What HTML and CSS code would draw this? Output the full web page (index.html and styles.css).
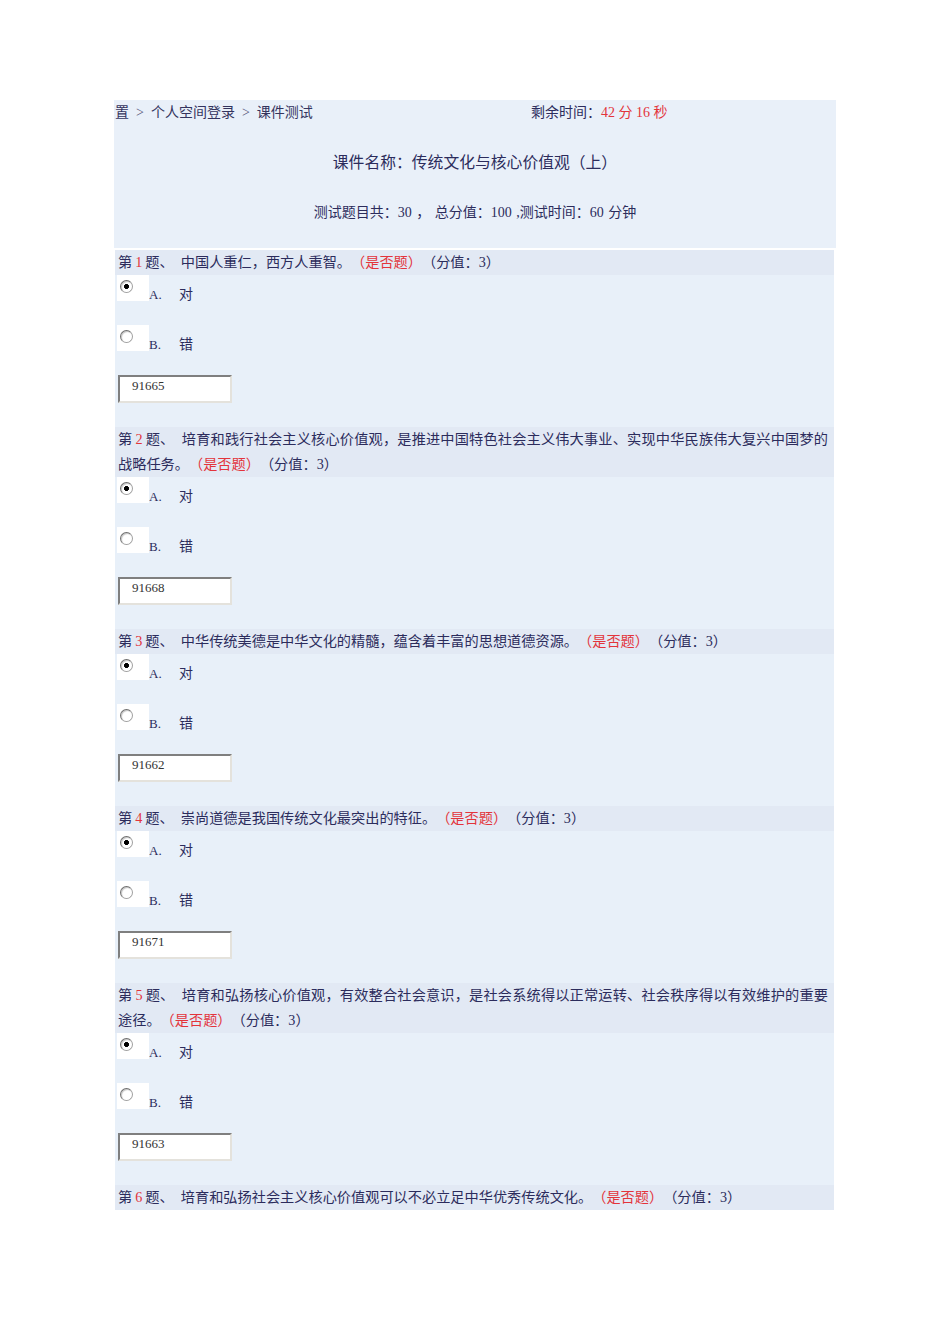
FILE: index.html
```html
<!DOCTYPE html>
<html lang="zh-CN">
<head>
<meta charset="utf-8">
<title>课件测试</title>
<link rel="stylesheet" href="styles.css">
</head>
<body>
<div class="page">
  <div class="top">
    <div class="bar">
      <div class="crumbs">置<span class="sep">&gt;</span>个人空间登录<span class="sep">&gt;</span>课件测试</div>
      <div class="timer">剩余时间：<span class="red">42 分 16 秒</span></div>
    </div>
    <div class="title">课件名称：传统文化与核心价值观（上）</div>
    <div class="info">测试题目共：30 ， 总分值：100 ,测试时间：60 分钟</div>
  </div>

  <div class="qs">
    <div class="q">
      <div class="q-head">第<span class="num">1</span>题、&nbsp;&nbsp;中国人重仁，西方人重智。<span class="red">（是否题）</span>（分值：3）</div>
      <label class="opt"><span class="rbox"><input type="radio" name="q1" checked></span><span class="letter">A.</span><span class="txt">对</span></label>
      <label class="opt"><span class="rbox"><input type="radio" name="q1"></span><span class="letter">B.</span><span class="txt">错</span></label>
      <input class="code" type="text" value="91665" readonly>
    </div>

    <div class="q">
      <div class="q-head">第<span class="num">2</span>题、&nbsp;&nbsp;培育和践行社会主义核心价值观，是推进中国特色社会主义伟大事业、实现中华民族伟大复兴中国梦的战略任务。<span class="red">（是否题）</span>（分值：3）</div>
      <label class="opt"><span class="rbox"><input type="radio" name="q2" checked></span><span class="letter">A.</span><span class="txt">对</span></label>
      <label class="opt"><span class="rbox"><input type="radio" name="q2"></span><span class="letter">B.</span><span class="txt">错</span></label>
      <input class="code" type="text" value="91668" readonly>
    </div>

    <div class="q">
      <div class="q-head">第<span class="num">3</span>题、&nbsp;&nbsp;中华传统美德是中华文化的精髓，蕴含着丰富的思想道德资源。<span class="red">（是否题）</span>（分值：3）</div>
      <label class="opt"><span class="rbox"><input type="radio" name="q3" checked></span><span class="letter">A.</span><span class="txt">对</span></label>
      <label class="opt"><span class="rbox"><input type="radio" name="q3"></span><span class="letter">B.</span><span class="txt">错</span></label>
      <input class="code" type="text" value="91662" readonly>
    </div>

    <div class="q">
      <div class="q-head">第<span class="num">4</span>题、&nbsp;&nbsp;崇尚道德是我国传统文化最突出的特征。<span class="red">（是否题）</span>（分值：3）</div>
      <label class="opt"><span class="rbox"><input type="radio" name="q4" checked></span><span class="letter">A.</span><span class="txt">对</span></label>
      <label class="opt"><span class="rbox"><input type="radio" name="q4"></span><span class="letter">B.</span><span class="txt">错</span></label>
      <input class="code" type="text" value="91671" readonly>
    </div>

    <div class="q">
      <div class="q-head">第<span class="num">5</span>题、&nbsp;&nbsp;培育和弘扬核心价值观，有效整合社会意识，是社会系统得以正常运转、社会秩序得以有效维护的重要途径。<span class="red">（是否题）</span>（分值：3）</div>
      <label class="opt"><span class="rbox"><input type="radio" name="q5" checked></span><span class="letter">A.</span><span class="txt">对</span></label>
      <label class="opt"><span class="rbox"><input type="radio" name="q5"></span><span class="letter">B.</span><span class="txt">错</span></label>
      <input class="code" type="text" value="91663" readonly>
    </div>

    <div class="q last">
      <div class="q-head">第<span class="num">6</span>题、&nbsp;&nbsp;培育和弘扬社会主义核心价值观可以不必立足中华优秀传统文化。<span class="red">（是否题）</span>（分值：3）</div>
    </div>
  </div>
</div>
</body>
</html>
```

FILE: styles.css
```css
html, body {
  margin: 0;
  padding: 0;
  background: #ffffff;
}

body {
  font-family: "Liberation Serif", "Noto Sans CJK SC", serif;
  font-size: 14px;
  color: #2c2c5c;
  text-spacing-trim: space-all;
}

.page {
  margin: 100px 0 0 114px;
  width: 722px;
}

.red {
  color: #e3343b;
}

.top {
  background: #e9f0f9;
  height: 148px;
}

.bar {
  display: grid;
  grid-template-columns: 417px 1fr;
  line-height: 25px;
  height: 25px;
}

.crumbs {
  padding-left: 1px;
  white-space: nowrap;
  color: #34345e;
}

.sep {
  margin: 0 7px;
  color: #55557a;
}

.timer {
  white-space: nowrap;
}

.title {
  margin-top: 25px;
  line-height: 25px;
  font-size: 15.8px;
  text-align: center;
}

.info {
  margin-top: 25px;
  line-height: 25px;
  font-size: 14px;
  word-spacing: 1px;
  text-align: center;
}

.qs {
  margin-top: 2px;
  width: 719px;
  margin-left: 1px;
}

.q {
  background: #e8f0f9;
  padding-bottom: 24px;
}

.q.last {
  padding-bottom: 0;
}

.q-head {
  background: #e2e9f4;
  line-height: 25px;
  font-size: 14.2px;
  text-align: justify;
  padding: 0 6px 0 3px;
}

.num {
  color: #e3343b;
  margin: 0 3px;
}

.opt {
  display: flex;
  align-items: flex-start;
  height: 50px;
  padding-left: 2px;
}

.rbox {
  display: block;
  width: 32px;
  height: 26px;
  background: #ffffff;
  position: relative;
}

.rbox input {
  appearance: none;
  -webkit-appearance: none;
  margin: 0;
  position: absolute;
  left: 3px;
  top: 5px;
  width: 13px;
  height: 13px;
  border-radius: 50%;
  border: 1px solid #a0a0a0;
  border-top-color: #6f6f6f;
  border-left-color: #6f6f6f;
  background: #ffffff;
  box-shadow: inset 1px 1px 1px #c4c4c4;
  box-sizing: border-box;
}

.rbox input:checked {
  background: radial-gradient(circle, #000000 0 2.2px, #ffffff 2.8px);
}

.letter {
  font-family: "Liberation Serif", serif;
  font-size: 13px;
  line-height: 14px;
  width: 30px;
  margin-top: 13px;
}

.txt {
  line-height: 14px;
  margin-top: 13px;
}

.code {
  display: block;
  margin: 0 0 0 3px;
  width: 114px;
  height: 28px;
  box-sizing: border-box;
  border: 2px solid;
  border-color: #7f7f7f #e4e2dc #e4e2dc #7f7f7f;
  background: #ffffff;
  padding: 0 0 6px 12px;
  font-family: "Liberation Serif", serif;
  font-size: 13px;
  color: #333333;
  outline: none;
}
```
